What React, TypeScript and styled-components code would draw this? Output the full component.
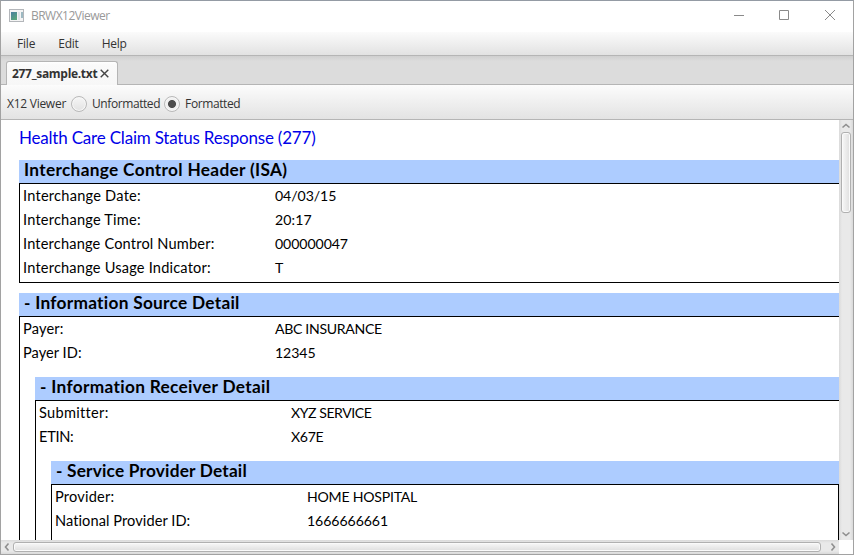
import React from 'react';
import styled, { createGlobalStyle, css } from 'styled-components';

const GlobalStyle = createGlobalStyle`
  * { box-sizing: border-box; }
  html, body { margin: 0; padding: 0; overflow: hidden; }
`;

const Window = styled.div`
  width: 854px;
  height: 555px;
  display: flex;
  flex-direction: column;
  border: 1px solid #a2a2a2;
  border-top-color: #949ba4;
  background: #fff;
  color: #333;
  font: 12px/16px 'Open Sans', 'Noto Sans', sans-serif;
  white-space: pre;
  overflow: hidden;
`;

const TitleBar = styled.header`
  height: 31px;
  flex: none;
  display: flex;
  align-items: center;
  padding: 0 17px 2px 8px;
  color: #999;
`;

const Label = styled.span<{ $track?: number }>`
  letter-spacing: ${(p) => p.$track ?? 0}px;
`;

const AppIcon = styled.svg`
  width: 16px;
  height: 14px;
  margin-right: 6px;
`;

const Caption = styled(Label)`
  flex: 1;
`;

const WindowButtons = styled.div`
  display: flex;
  gap: 34px;
  margin-bottom: 1px;
  svg { width: 12px; height: 12px; display: block; }
`;

const MenuBar = styled.nav`
  height: 24px;
  flex: none;
  display: flex;
  align-items: center;
  gap: 23px;
  padding-left: 16px;
  border-bottom: 1px solid #b5b5b5;
  background: linear-gradient(#fbfbfb, #e2e2e2);
`;

const TabStrip = styled.div`
  height: 29px;
  flex: none;
  display: flex;
  align-items: flex-end;
  padding-left: 5px;
  border-bottom: 1px solid #b5b5b5;
  background: linear-gradient(#cfcfcf, #dcdcdc 5px);
`;

const Tab = styled.div`
  width: 112px;
  height: 24px;
  margin-bottom: -1px;
  padding: 0 0 0 5px;
  display: flex;
  align-items: center;
  gap: 3px;
  border: 1px solid #b5b5b5;
  border-bottom: 0;
  border-radius: 3px 3px 0 0;
  background: linear-gradient(#fff, #fafafa 3px, #f7f7f7);
  font-weight: 700;
  svg { width: 9px; height: 9px; }
`;

const Toolbar = styled.div`
  height: 35px;
  flex: none;
  display: flex;
  align-items: center;
  padding: 3px 0 0 6px;
  border-bottom: 1px solid #b5b5b5;
  background: linear-gradient(#fcfcfc, #e3e3e3);
`;

const Radio = styled.span<{ $checked?: boolean }>`
  width: 16px;
  height: 16px;
  flex: none;
  margin: 0 5px 0 ${(p) => (p.$checked ? 4 : 5)}px;
  border: 1px solid #b9b9b9;
  border-radius: 50%;
  background: ${(p) =>
    p.$checked
      ? 'radial-gradient(circle, #4d4d4d 3.6px, #f0f0f0 4.4px)'
      : 'linear-gradient(#f6f6f6, #e2e2e2)'};
  box-shadow: inset 0 0 0 1px #f7f7f7;
`;

const Body = styled.div`
  flex: 1;
  display: grid;
  grid-template: 420px 14px / 838px 14px;
  min-height: 0;
`;

const Page = styled.main`
  padding: 8px 0 0 18px;
  overflow: hidden;
  font: 14.6px/24px Lato, 'Open Sans', sans-serif;
  color: #000;
`;

const PageTitle = styled.h1`
  margin: 0 0 11px;
  height: 21px;
  font-size: 17px;
  line-height: 20px;
  font-weight: 400;
  color: #0000e8;
`;

const Section = styled.section<{ $nested?: boolean }>`
  margin: ${(p) => (p.$nested ? '12px 0 0 15px' : '0 0 10px')};
`;

const SectionHead = styled.h2`
  margin: 0;
  height: 23px;
  padding-left: 5px;
  background: #adccff;
  font-size: 17.3px;
  line-height: 20px;
  font-weight: 700;
`;

const Fields = styled.div<{ $open?: boolean; $right?: boolean }>`
  border: solid #000;
  border-width: ${(p) => `1px ${p.$right ? 1 : 0}px ${p.$open ? 0 : 1}px 1px`};
  padding-bottom: ${(p) => (p.$open ? 0 : 2)}px;
  ${(p) => p.$right && css`height: 200px;`}
`;

const Row = styled.div`
  display: grid;
  grid-template-columns: 252px 1fr;
  height: 24px;
  padding-left: 3px;
`;

const Value = styled.div`
  font-size: 14.1px;
`;

const Scroll = styled.div<{ $vertical?: boolean }>`
  display: flex;
  flex-direction: ${(p) => (p.$vertical ? 'column' : 'row')};
  align-items: center;
  justify-content: space-between;
  background: linear-gradient(${(p) => (p.$vertical ? '90deg' : '180deg')}, #dadada, #e9e9e9 3px, #e9e9e9 11px, #d9d9d9);
  svg { display: block; flex: none; }
`;

const Thumb = styled.div<{ $vertical?: boolean }>`
  border: 1px solid #b0b0b0;
  border-radius: 3px;
  box-shadow: inset 0 0 0 1px #fafafa;
  ${(p) =>
    p.$vertical
      ? css`width: 10px; height: 81px; margin-bottom: auto; background: linear-gradient(90deg, #f8f8f8, #dedede);`
      : css`height: 10px; width: 808px; margin-right: auto; background: linear-gradient(#f8f8f8, #dedede);`}
`;

const Arrow = ({ d, w = 14, h = 12 }: { d: string; w?: number; h?: number }) => (
  <svg width={w} height={h} viewBox={`0 0 ${w} ${h}`}>
    <path d={d} fill="none" stroke="#8f8f8f" strokeWidth="1.6" />
  </svg>
);

type Field = { name: string; track: number; value: string; valueTrack: number };

const isaFields: Field[] = [
  { name: 'Interchange Date:', track: 0.23, value: '04/03/15', valueTrack: -0.06 },
  { name: 'Interchange Time:', track: 0.2, value: '20:17', valueTrack: 0.1 },
  { name: 'Interchange Control Number:', track: 0.17, value: '000000047', valueTrack: -0.07 },
  { name: 'Interchange Usage Indicator:', track: 0.19, value: 'T', valueTrack: 0 },
];

const sourceFields: Field[] = [
  { name: 'Payer:', track: 0.15, value: 'ABC INSURANCE', valueTrack: -0.33 },
  { name: 'Payer ID:', track: 0.04, value: '12345', valueTrack: -0.07 },
];

const receiverFields: Field[] = [
  { name: 'Submitter:', track: 0.3, value: 'XYZ SERVICE', valueTrack: -0.45 },
  { name: 'ETIN:', track: -0.3, value: 'X67E', valueTrack: -0.3 },
];

const providerFields: Field[] = [
  { name: 'Provider:', track: 0.2, value: 'HOME HOSPITAL', valueTrack: -0.23 },
  { name: 'National Provider ID:', track: 0.07, value: '1666666661', valueTrack: -0.07 },
];

const FieldRows = ({ items }: { items: Field[] }) => (
  <>
    {items.map((f) => (
      <Row key={f.name}>
        <div><Label $track={f.track}>{f.name}</Label></div>
        <Value><Label $track={f.valueTrack}>{f.value}</Label></Value>
      </Row>
    ))}
  </>
);

export default function App() {
  return (
    <Window>
      <GlobalStyle />
      <TitleBar>
        <AppIcon viewBox="0 0 16 14">
          <defs>
            <linearGradient id="pane" x1="0" y1="0" x2="0.6" y2="1">
              <stop offset="0" stopColor="#4a7fa0" />
              <stop offset="1" stopColor="#5aa57c" />
            </linearGradient>
          </defs>
          <rect x=".5" y=".5" width="14" height="12" fill="#f4f4f4" stroke="#b3b6ba" />
          <rect x="2" y="3" width="6" height="8" fill="url(#pane)" />
          <rect x="9" y="3" width="2" height="8" fill="#dfe4e8" />
          <rect x="12" y="3" width="2" height="6" fill="#9db9c2" />
        </AppIcon>
        <Caption $track={-0.52}>BRWX12Viewer</Caption>
        <WindowButtons>
          <svg viewBox="0 0 12 12"><path d="M2 6.5h10" stroke="#8a8a8a" /></svg>
          <svg viewBox="0 0 12 12"><path d="M1.5 1.5h9v9h-9z" stroke="#8a8a8a" fill="none" /></svg>
          <svg viewBox="0 0 12 12"><path d="M1 1l10 10M11 1L1 11" stroke="#8a8a8a" /></svg>
        </WindowButtons>
      </TitleBar>
      <MenuBar>
        <Label $track={-0.2}>File</Label>
        <Label $track={-0.22}>Edit</Label>
        <Label $track={-0.25}>Help</Label>
      </MenuBar>
      <TabStrip>
        <Tab>
          <Label $track={-0.31}>277_sample.txt</Label>
          <svg viewBox="0 0 9 9"><path d="M.7.7l7.6 7.6M8.3.7L.7 8.3" stroke="#444" strokeWidth="1.4" /></svg>
        </Tab>
      </TabStrip>
      <Toolbar>
        <Label $track={-0.26}>X12 Viewer</Label>
        <Radio />
        <Label $track={-0.42}>Unformatted</Label>
        <Radio $checked />
        <Label $track={-0.41}>Formatted</Label>
      </Toolbar>
      <Body>
        <Page>
          <PageTitle><Label $track={-0.2}>Health Care Claim Status Response (277)</Label></PageTitle>
          <Section>
            <SectionHead><Label $track={0.31}>Interchange Control Header (ISA)</Label></SectionHead>
            <Fields>
              <FieldRows items={isaFields} />
            </Fields>
          </Section>
          <Section>
            <SectionHead><Label $track={0.27}>- Information Source Detail</Label></SectionHead>
            <Fields $open>
              <FieldRows items={sourceFields} />
              <Section $nested>
                <SectionHead><Label $track={0.31}>- Information Receiver Detail</Label></SectionHead>
                <Fields $open>
                  <FieldRows items={receiverFields} />
                  <Section $nested>
                    <SectionHead><Label $track={0.19}>- Service Provider Detail</Label></SectionHead>
                    <Fields $open $right>
                      <FieldRows items={providerFields} />
                    </Fields>
                  </Section>
                </Fields>
              </Section>
            </Fields>
          </Section>
        </Page>
        <Scroll $vertical>
          <Arrow d="M3.5 7.5L7 4.5l3.5 3" />
          <Thumb $vertical />
          <Arrow d="M3.5 4.5L7 7.5l3.5-3" />
        </Scroll>
        <Scroll>
          <Arrow w={12} h={14} d="M7.5 3.5L4.5 7l3 3.5" />
          <Thumb />
          <Arrow w={12} h={14} d="M4.5 3.5L7.5 7l-3 3.5" />
        </Scroll>
      </Body>
    </Window>
  );
}
